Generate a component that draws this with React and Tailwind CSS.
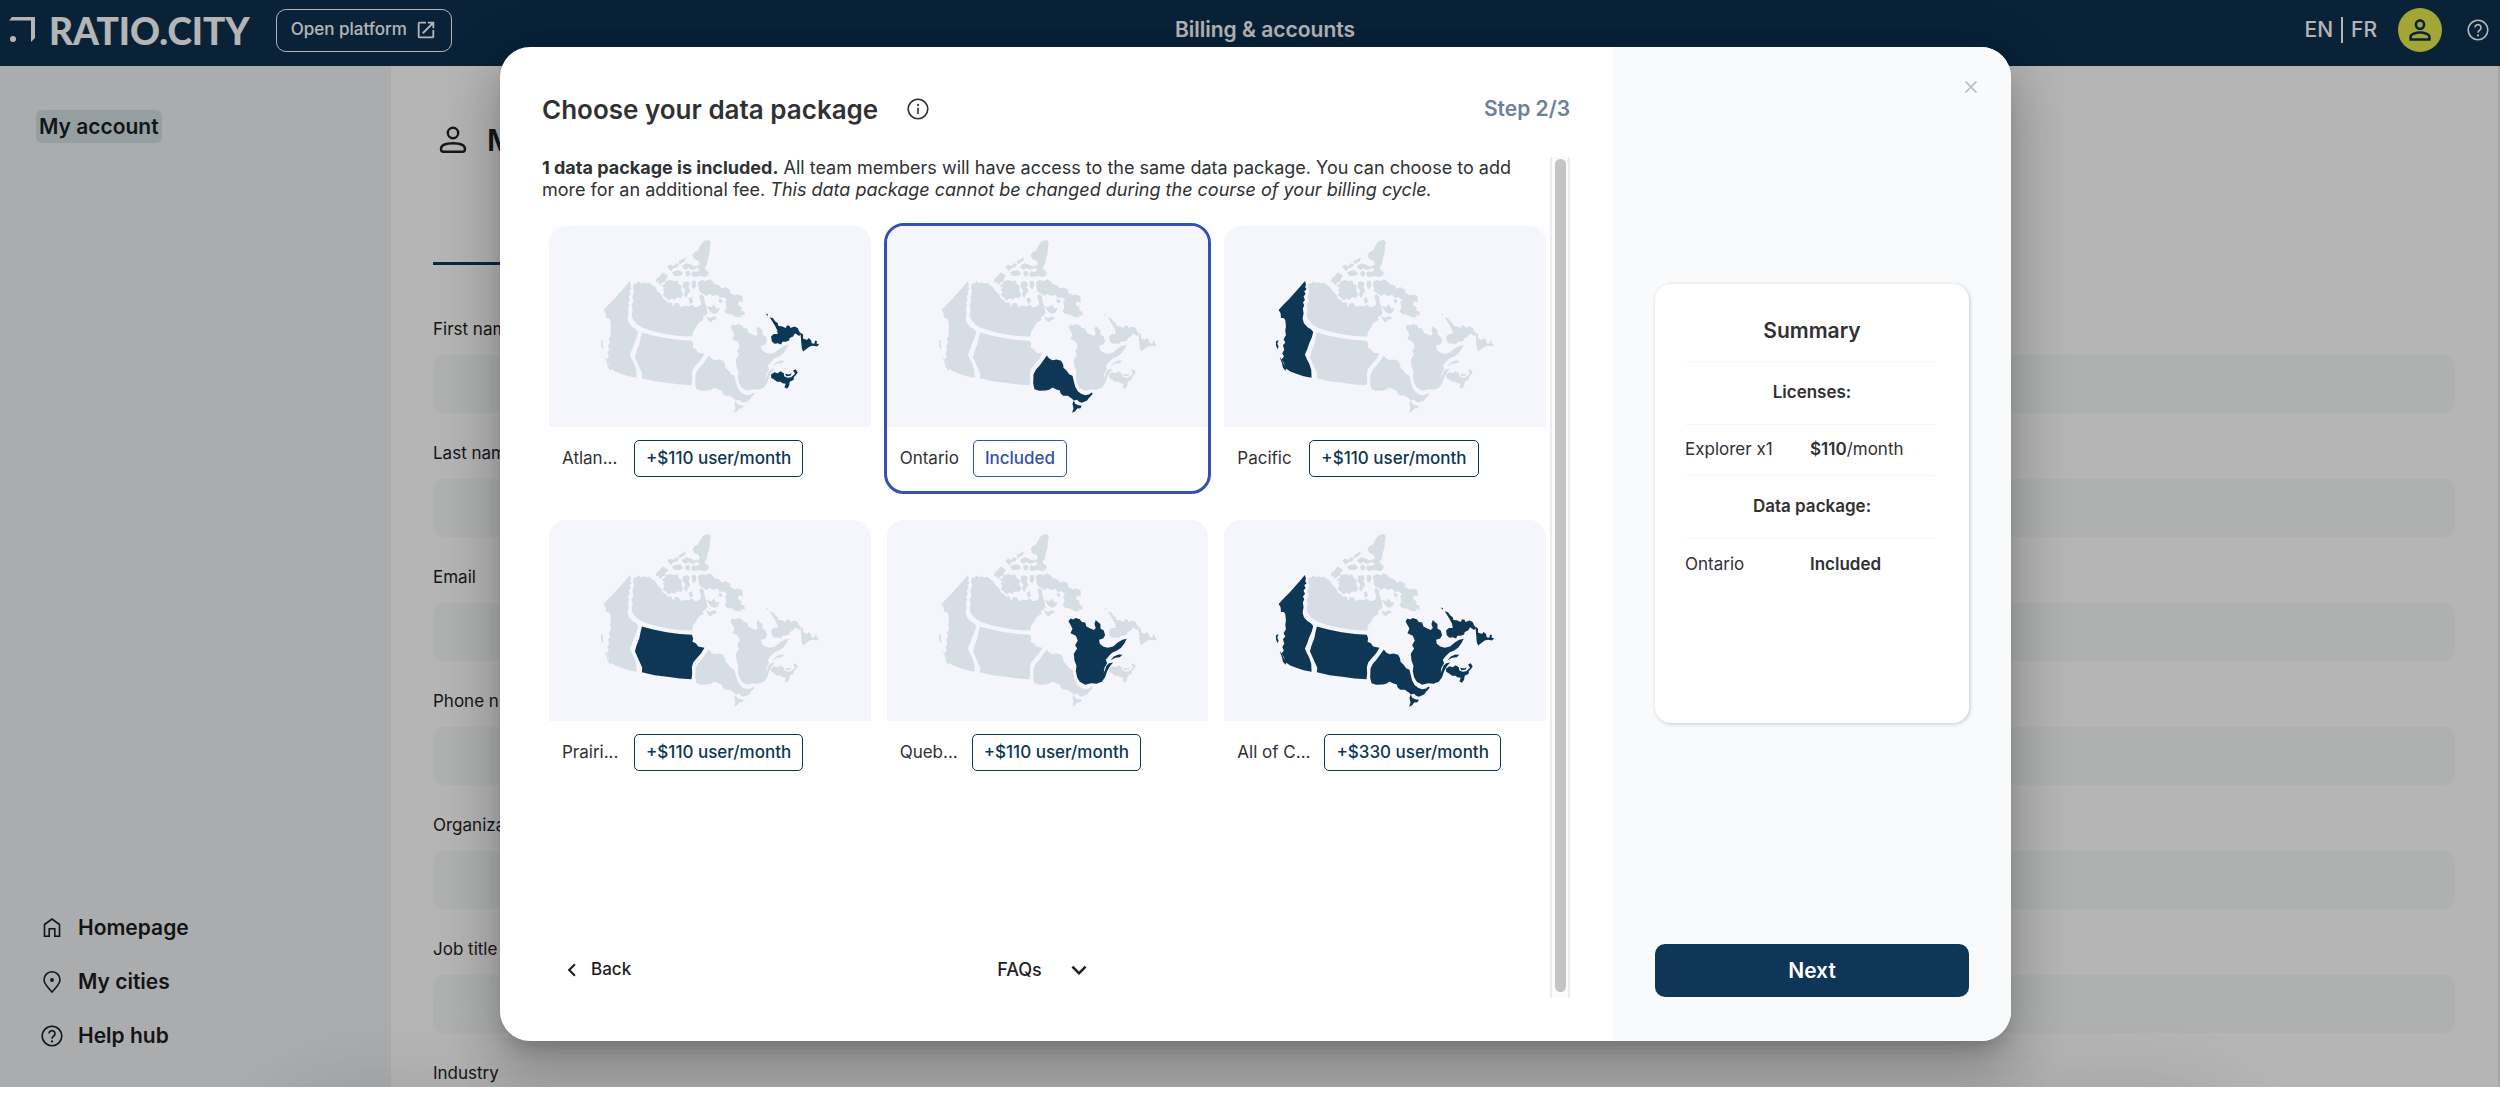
import React, { useState } from 'react';
import { MdChevronLeft, MdExpandMore, MdOpenInNew, MdPersonOutline } from 'react-icons/md';
import clsx from 'clsx';

const FIELDS = ['First name', 'Last name', 'Email', 'Phone number', 'Organization', 'Job title', 'Industry'];

const PACKAGES = [
  { id: 'atlantic', label: 'Atlan...', price: '+$110 user/month', regions: ['atlantic'] },
  { id: 'ontario', label: 'Ontario', price: 'Included', regions: ['ontario'] },
  { id: 'pacific', label: 'Pacific', price: '+$110 user/month', regions: ['pacific'] },
  { id: 'prairies', label: 'Prairi...', price: '+$110 user/month', regions: ['prairies'] },
  { id: 'quebec', label: 'Queb...', price: '+$110 user/month', regions: ['quebec'] },
  {
    id: 'canada',
    label: 'All of C...',
    price: '+$330 user/month',
    regions: ['atlantic', 'ontario', 'pacific', 'prairies', 'quebec'],
  },
];

// Outlines of the regions, all in the same coordinate space
const REGION_PATHS = {
  north: [
    // mainland
    'M281 192 L290 190 L296 184 L303 190 L312 187 L320 191 L328 188 L337 196 L347 203 L353 214 L364 224 L369 236 L377 240 L383 248 L394 247 L401 262 L404 250 L415 249 L424 262 L434 257 L445 260 L456 254 L466 262 L476 260 L484 254 L482 240 L478 228 L484 222 L492 228 L494 244 L500 262 L503 280 L497 287 L489 291 L491 300 L480 306 L474 312 L468 324 L460 334 L457 350 L430 349 L400 346 L370 341 L340 334 L310 324 L292 314 L280 300 L275 286 L278 270 L275 256 L281 244 L277 232 L283 214 L279 204Z',
    // western islands
    'M350 176 L360 168 L368 157 L377 162 L385 168 L379 174 L376 184 L368 188 L360 196 L356 188 L348 186Z',
    'M377 184 L392 180 L404 184 L412 180 L416 192 L426 198 L424 212 L430 222 L424 235 L412 232 L404 240 L396 236 L384 242 L380 234 L368 226 L374 216 L368 208 L376 204 L364 198 L374 192Z',
    'M382 140 L392 134 L400 138 L408 130 L418 132 L412 142 L400 146 L394 154 L388 148Z',
    'M396 158 L408 152 L422 152 L430 162 L420 168 L404 168Z',
    'M416 124 L428 118 L438 112 L436 122 L426 128 L420 134Z',
    'M426 138 L440 130 L452 134 L464 140 L472 136 L470 146 L456 150 L446 144 L438 150 L430 146Z',
    'M436 156 L446 152 L452 160 L448 170 L438 168Z',
    'M430 186 L442 184 L450 190 L446 202 L452 214 L444 222 L440 234 L432 226 L436 212 L428 200Z',
    'M456 184 L466 182 L470 194 L464 208 L456 202Z',
    'M446 236 L456 232 L460 246 L450 252Z',
    // Ellesmere
    'M493 63 L506 60 L513 66 L510 84 L509 102 L504 116 L501 134 L494 144 L500 152 L507 156 L505 166 L494 172 L482 168 L470 170 L460 172 L454 164 L458 154 L470 156 L480 150 L470 142 L480 132 L476 122 L464 118 L458 106 L464 96 L474 92 L480 80 L486 70Z',
    // Baffin
    'M474 186 L486 180 L498 184 L508 178 L518 184 L524 192 L538 196 L546 206 L558 202 L572 210 L570 218 L584 226 L594 224 L608 228 L609 248 L598 244 L594 254 L606 264 L604 272 L614 276 L615 288 L602 284 L606 292 L590 292 L576 284 L562 282 L554 274 L560 262 L556 246 L562 240 L552 232 L540 234 L532 224 L520 228 L508 222 L500 228 L490 222 L478 214Z',
    'M500 258 L514 262 L522 254 L530 266 L540 264 L534 276 L524 282 L512 276Z',
    'M536 236 L548 240 L546 250 L538 248Z',
    'M498 288 L510 294 L524 288 L532 296 L520 300 L512 308 L504 300Z',
  ],
  pacific: [
    'M270 183 L273 194 L271 202 L275 208 L268 214 L272 222 L266 230 L270 240 L264 248 L268 256 L264 266 L266 280 L263 296 L267 310 L278 322 L288 328 L295 336 L291 352 L283 370 L277 388 L270 404 L276 418 L283 432 L289 450 L290 474 L266 469 L244 462 L226 455 L214 447 L207 430 L200 418 L207 410 L202 400 L208 390 L204 376 L211 368 L206 358 L213 346 L211 332 L213 320 L211 300 L206 294 L198 294 L197 280 L191 270 L206 254 L222 238 L238 220 L256 200Z',
    'M183 364 L191 360 L187 372 L191 380 L188 388 L183 376Z',
    'M194 411 L201 420 L206 432 L215 443 L212 453 L204 444 L201 430Z',
  ],
  prairies: [
    'M306 338 L340 347 L380 355 L420 360 L456 363 L460 374 L458 384 L468 388 L475 398 L494 402 L484 418 L472 432 L460 446 L456 460 L457 480 L455 496 L420 494 L382 489 L344 484 L306 475 L307 462 L300 446 L293 430 L285 412 L290 394 L298 374 L302 354Z',
  ],
  ontario: [
    'M507 407 L514 416 L524 421 L536 419 L550 423 L556 434 L557 444 L566 452 L574 463 L584 468 L588 484 L592 500 L600 514 L610 522 L622 526 L634 524 L641 518 L645 522 L634 534 L628 542 L612 549 L604 546 L598 540 L588 542 L592 552 L602 556 L612 558 L608 565 L598 566 L592 574 L583 579 L587 566 L584 552 L588 542 L582 536 L570 528 L556 528 L548 520 L546 512 L534 508 L524 503 L514 510 L504 512 L484 513 L470 508 L466 492 L467 464 L474 450 L486 436Z',
  ],
  quebec: [
    'M572 322 L578 314 L586 317 L594 312 L606 316 L612 324 L622 326 L626 338 L638 344 L648 348 L654 342 L650 330 L654 318 L662 326 L668 330 L668 344 L678 350 L682 364 L676 374 L664 378 L666 390 L676 398 L690 402 L706 398 L720 386 L734 378 L747 375 L740 388 L730 402 L718 410 L704 416 L694 426 L684 438 L688 448 L680 462 L678 476 L682 490 L672 504 L656 510 L640 508 L622 513 L606 504 L598 490 L594 472 L596 456 L590 440 L588 420 L598 404 L592 394 L600 380 L594 366 L578 358 L584 344Z',
    'M698 440 L708 428 L722 422 L734 423 L726 430 L712 432Z',
    'M674 484 L682 468 L686 456 L694 448 L706 446 L696 458 L688 472 L682 490Z',
  ],
  atlantic: [
    'M679 280 L685 284 L682 288Z',
    'M690 292 L700 295 L706 304 L714 310 L716 318 L726 319 L738 324 L742 316 L750 318 L752 324 L764 320 L774 324 L778 334 L784 342 L778 348 L766 340 L760 350 L750 354 L748 362 L738 366 L728 366 L724 374 L714 370 L704 372 L696 364 L694 350 L702 342 L714 342 L712 330 L706 318 L696 302Z',
    'M782 338 L790 344 L790 356 L802 360 L806 354 L814 360 L816 370 L824 372 L826 362 L832 364 L830 370 L838 374 L832 380 L820 378 L810 380 L802 386 L790 395 L786 384Z',
    'M694 464 L704 457 L714 460 L722 454 L732 460 L734 470 L744 474 L754 472 L766 462 L760 452 L768 448 L774 458 L768 466 L762 472 L762 480 L750 486 L748 498 L742 507 L734 502 L738 492 L728 490 L722 486 L712 486 L702 478 L694 474Z',
    'M736 462 L748 464 L756 460 L752 468 L740 469Z',
  ],
};

const CanadaMap = ({ active }) => (
  <svg viewBox="27 18 966 603" className="block w-full" aria-hidden="true">
    {Object.entries(REGION_PATHS).map(([region, paths]) => (
      <g key={region} fill={active.includes(region) ? '#0d3755' : '#d7dde5'}>
        {paths.map((d) => (
          <path key={d} d={d} />
        ))}
      </g>
    ))}
  </svg>
);

const HomeIcon = () => (
  <svg width="24" height="24" viewBox="0 0 24 24" fill="none" stroke="currentColor" strokeWidth="1.6">
    <path d="M4.5 8.5 L12 3 L19.5 8.5 V20.2 H14.8 V12.8 H9.2 V20.2 H4.5Z" />
  </svg>
);

const PinIcon = () => (
  <svg width="24" height="24" viewBox="0 0 24 24" fill="none" stroke="currentColor" strokeWidth="1.6">
    <path d="M12 22 C9 18.6 4 14.4 4 9.8 A8 8 0 0 1 20 9.8 C20 14.4 15 18.6 12 22Z" />
    <circle cx="12" cy="10" r="1.9" fill="currentColor" stroke="none" />
  </svg>
);

const HelpIcon = () => (
  <svg width="24" height="24" viewBox="0 0 24 24" fill="none" stroke="currentColor" strokeWidth="1.6">
    <circle cx="12" cy="12" r="9.8" />
    <path d="M9 9.6 A3 3 0 1 1 13.6 12.2 C12.5 13 12 13.5 12 14.8" />
    <circle cx="12" cy="17.4" r="1.1" fill="currentColor" stroke="none" />
  </svg>
);

const InfoIcon = () => (
  <svg width="24" height="24" viewBox="0 0 24 24" fill="none" stroke="currentColor" strokeWidth="1.6">
    <circle cx="12" cy="12" r="9.8" />
    <path d="M12 10.8 V17" />
    <circle cx="12" cy="7.9" r="1.1" fill="currentColor" stroke="none" />
  </svg>
);

const AccountIcon = () => (
  <svg width="40" height="40" viewBox="0 0 40 40" fill="none" stroke="currentColor" strokeWidth="2.4">
    <circle cx="20" cy="13" r="5.2" />
    <path d="M8 29 C8 25 13 23.2 20 23.2 C27 23.2 32 25 32 29 C32 31 31 31.8 29.5 31.8 H10.5 C9 31.8 8 31 8 29Z" />
  </svg>
);

const CloseIcon = () => (
  <svg width="14" height="14" viewBox="0 0 14 14" fill="none" stroke="currentColor" strokeWidth="1.6">
    <path d="M1.5 1.5 L12.5 12.5 M12.5 1.5 L1.5 12.5" />
  </svg>
);

const NAV_LINKS = [
  { label: 'Homepage', icon: <HomeIcon /> },
  { label: 'My cities', icon: <PinIcon /> },
  { label: 'Help hub', icon: <HelpIcon /> },
];

const Header = () => (
  <header className="grid h-[66px] shrink-0 grid-cols-[1fr_auto_1fr] items-center bg-[#0e3050] pr-[10px] pb-[6px] pl-2 text-white">
    <div className="flex items-center gap-[26px]">
      <a href="#home" className="flex items-center gap-[13px]">
        <svg width="28" height="28" viewBox="0 0 28 28" fill="none">
          <path d="M4 1 H27 V22 L23 26 V4.5 H1Z" fill="currentColor" />
          <circle cx="5" cy="23" r="3" fill="currentColor" />
        </svg>
        <span className="font-[Lato] text-[37px] leading-[37px] font-black">RATIO.CITY</span>
      </a>
      <button className="flex h-[43px] items-center gap-2 rounded-[10px] border border-white px-[14px] text-[17px] font-medium">
        Open platform
        <MdOpenInNew size={22} />
      </button>
    </div>
    <h1 className="pl-8 text-[21px] font-semibold">Billing &amp; accounts</h1>
    <div className="flex items-center justify-end">
      <div className="flex items-center gap-2 text-[21px] font-medium">
        <button>EN</button>
        <span className="h-[26px] w-[2px] bg-white" />
        <button>FR</button>
      </div>
      <button aria-label="Profile" className="ml-[21px] flex size-11 items-center justify-center rounded-full bg-[#e4ea4d] text-[#0e3050]">
        <MdPersonOutline size={32} />
      </button>
      <button aria-label="Help" className="ml-6">
        <HelpIcon />
      </button>
    </div>
  </header>
);

const Sidebar = () => (
  <aside className="flex w-[391px] shrink-0 flex-col justify-between bg-[#f1f2f4] px-9 pt-11 pb-6 text-[21px] font-semibold text-[#1c1d1f]">
    <a href="#account" className="self-start rounded-md bg-[#d2dfe3] px-[3px] leading-[33px]">
      My account
    </a>
    <nav className="flex flex-col pl-1">
      {NAV_LINKS.map(({ label, icon }) => (
        <a key={label} href="#nav" className="flex h-[54px] items-center gap-[14px]">
          {icon}
          {label}
        </a>
      ))}
    </nav>
  </aside>
);

const AccountForm = () => (
  <main className="flex-1 overflow-hidden border-r-2 border-[#e8e8e8] bg-white pt-[52px] pr-[43px] pl-[42px] text-[#222325]">
    <div className="flex h-11 items-center gap-[14px]">
      <AccountIcon />
      <h2 className="text-[30px] font-semibold">My account</h2>
    </div>
    <div className="mt-[100px] mb-[58px] h-[3px] w-[300px] bg-[#0e3a60]" />
    <form className="flex flex-col gap-[34px]">
      {FIELDS.map((field) => (
        <label key={field} className="flex flex-col gap-5 text-[17px] leading-3">
          <span>{field}</span>
          <input type="text" className="h-[58px] rounded-[10px] bg-[#f5f9f8]" />
        </label>
      ))}
    </form>
  </main>
);

const PackageCard = ({ pkg, selected, onSelect }) => (
  <button
    onClick={onSelect}
    className={clsx(
      'overflow-hidden rounded-[20px] border-[3px] text-left',
      selected ? 'border-[#3550b0]' : 'border-transparent'
    )}
  >
    <div className="bg-[#f5f6fb]">
      <CanadaMap active={pkg.regions} />
    </div>
    <div className="flex h-16 items-center gap-[14px] px-[13px] text-[17px]">
      <span className="min-w-[58px]">{pkg.label}</span>
      <span
        className={clsx(
          'flex h-[37px] items-center rounded-[5px] border px-[11px] font-medium',
          selected ? 'border-[#3550b0] text-[#3550b0]' : 'border-[#0d3755] text-[#0d3755]'
        )}
      >
        {pkg.price}
      </span>
    </div>
  </button>
);

const Summary = () => (
  <section className="mt-[190px] flex flex-col items-center rounded-[16px] bg-white pt-6 pr-[34px] pb-[133px] pl-[30px] shadow-[1px_1px_4px_rgba(0,0,0,0.2)]">
    <h3 className="mb-[7px] pl-1 text-[21px] leading-[46px] font-semibold">Summary</h3>
    <table className="w-full table-fixed text-[17px]">
      <tbody>
        <tr className="h-[63px] border-y border-[#f7f7f7]">
          <th colSpan={2} className="pl-1 font-semibold">Licenses:</th>
        </tr>
        <tr className="h-[51px]">
          <td>Explorer x1</td>
          <td><b className="font-semibold">$110</b>/month</td>
        </tr>
        <tr className="h-[63px] border-y border-[#f7f7f7]">
          <th colSpan={2} className="pl-1 font-semibold">Data package:</th>
        </tr>
        <tr className="h-[51px]">
          <td>Ontario</td>
          <td className="font-semibold">Included</td>
        </tr>
      </tbody>
    </table>
  </section>
);

const DataPackageModal = () => {
  const [selected, setSelected] = useState('ontario');

  return (
    <div
      role="dialog"
      aria-label="Choose your data package"
      className="flex w-full max-w-[1511px] overflow-hidden rounded-[30px] bg-white text-[#303133] shadow-[0_14px_20px_-9px_rgba(0,0,0,0.2),0_30px_50px_4px_rgba(0,0,0,0.14),0_12px_60px_10px_rgba(0,0,0,0.12),0_1293px_80px_250px_rgba(0,0,0,0.12)]"
    >
      {/* Package picker */}
      <div className="flex flex-1 flex-col pt-[42px] pr-[43px] pb-[43px] pl-[42px]">
        <div className="mb-7 flex h-10 items-center">
          <h2 className="text-[26px] font-semibold">Choose your data package</h2>
          <span className="ml-7">
            <InfoIcon />
          </span>
          <span className="ml-auto text-[21px] font-semibold text-[#6c809a]">Step 2/3</span>
        </div>

        <div className="flex flex-1">
          <div className="flex flex-1 flex-col">
            <p className="pr-4 text-lg leading-[22px]">
              <b className="font-bold">1 data package is included.</b> All team members will have access to the same
              data package. You can choose to add more for an additional fee.{' '}
              <em>This data package cannot be changed during the course of your billing cycle.</em>
            </p>
            <div className="mt-[22px] grid grid-cols-3 gap-x-[10px] gap-y-[23px] pl-1">
              {PACKAGES.map((pkg) => (
                <PackageCard
                  key={pkg.id}
                  pkg={pkg}
                  selected={selected === pkg.id}
                  onSelect={() => setSelected(pkg.id)}
                />
              ))}
            </div>
            <div className="mt-auto grid h-[57px] grid-cols-3 items-center font-medium text-[#1f2022]">
              <button className="flex items-center gap-[6px] justify-self-start pl-[17px] text-[17px]">
                <MdChevronLeft size={26} />
                Back
              </button>
              <button className="flex items-center gap-[22px] justify-self-center text-lg">
                FAQs
                <MdExpandMore size={30} />
              </button>
            </div>
          </div>
          {/* Scrollbar */}
          <div className="ml-[1px] flex w-5 justify-center border-x-2 border-[#ececee] bg-[#fbfbfc] pt-[2px] pb-[6px]">
            <div className="w-[11px] rounded-full bg-[#c4c4c4]" />
          </div>
        </div>
      </div>

      {/* Order summary */}
      <div className="flex w-[398px] shrink-0 flex-col bg-[#f9fafc] px-[42px] pt-[33px] pb-11">
        <button aria-label="Close" className="-mr-[9px] self-end text-[#b4b9c2]">
          <CloseIcon />
        </button>
        <Summary />
        <button className="mt-auto h-[53px] rounded-[10px] bg-[#0f3656] text-[21px] font-semibold text-white">
          Next
        </button>
      </div>
    </div>
  );
};

const App = () => (
  <div className="h-screen bg-white pb-[7px] font-[Inter,sans-serif]">
    <div className="relative flex h-full flex-col overflow-hidden">
      <Header />
      <div className="flex min-h-0 flex-1">
        <Sidebar />
        <AccountForm />
      </div>
      {/* Overlay */}
      <div className="absolute inset-0 flex justify-center bg-black/29 pt-[47px] pb-[46px] pl-[11px]">
        <DataPackageModal />
      </div>
    </div>
  </div>
);

export default App;
